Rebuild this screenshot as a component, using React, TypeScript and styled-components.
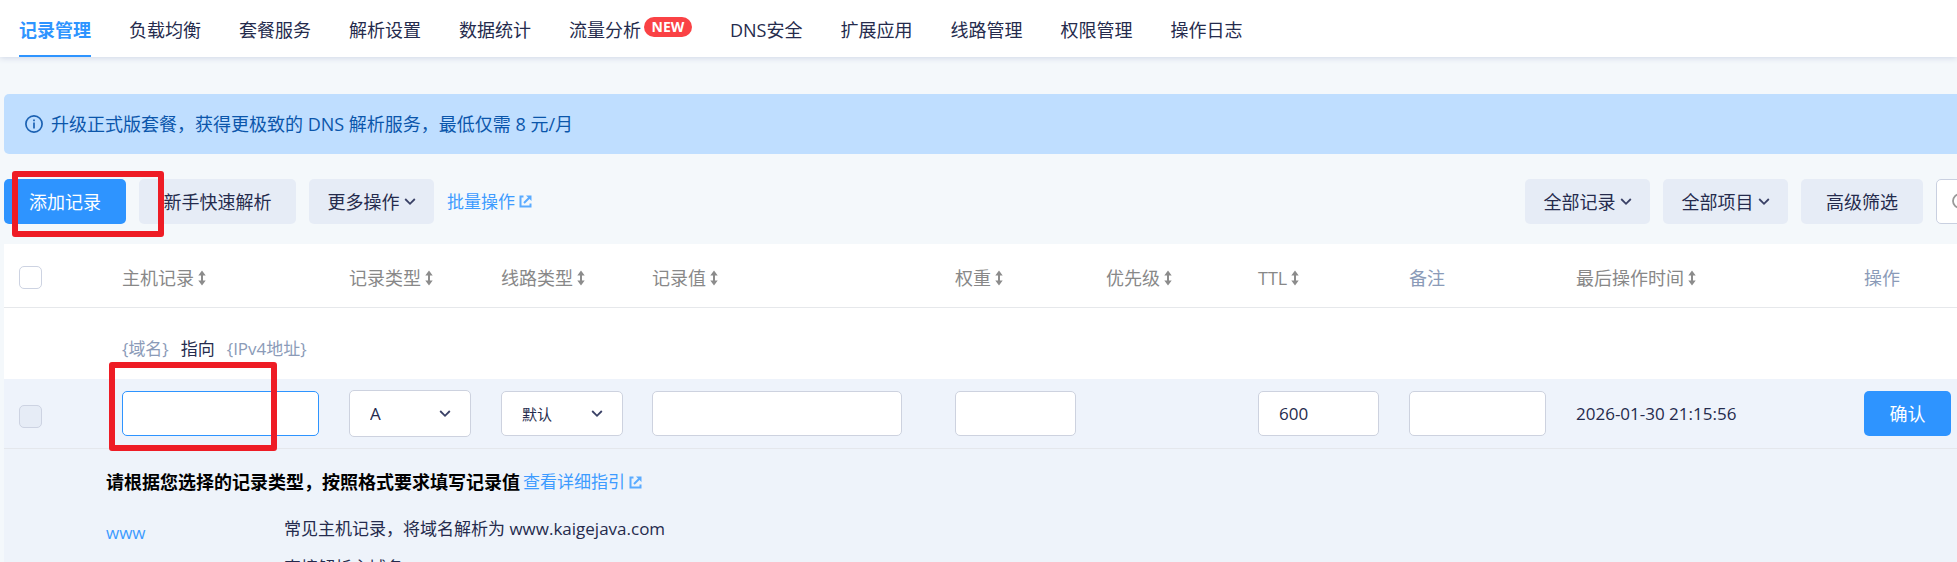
import React from "react";
import styled, { createGlobalStyle, css } from "styled-components";

const GlobalStyle = createGlobalStyle`
  *, *::before, *::after { box-sizing: border-box; }
  html, body { margin: 0; height: 100%; overflow: hidden; }
  body {
    background: #f4f8fb;
    color: #252b4d;
    font-family: "Open Sans", "Noto Sans CJK SC", sans-serif;
    font-size: 18px;
    line-height: 24px;
  }
  button, input, select { font: inherit; color: inherit; margin: 0; }
`;

const Nav = styled.nav`
  display: flex;
  gap: 38px;
  height: 57px;
  padding-left: 19px;
  background: #fff;
  box-shadow: 0 1px 6px #cfd6e6;
  white-space: nowrap;
`;

const NavLink = styled.a<{ $active?: boolean }>`
  display: flex;
  align-items: center;
  padding-top: 4px;
  border-bottom: 2px solid ${(p) => (p.$active ? "#2e94ff" : "transparent")};
  color: ${(p) => (p.$active ? "#2e94ff" : "#252b4d")};
  font-weight: ${(p) => (p.$active ? 700 : 400)};
  text-decoration: none;
`;

const NewBadge = styled.span`
  align-self: flex-start;
  width: 48px;
  height: 20px;
  margin: 13px 0 0 3px;
  border-radius: 10px;
  background: #fa4245;
  color: #fff;
  font-size: 14px;
  font-weight: 700;
  line-height: 20px;
  text-align: center;
`;

const Main = styled.main`
  padding: 37px 0 0 4px;
`;

const Notice = styled.div`
  display: flex;
  align-items: center;
  gap: 8px;
  height: 60px;
  padding: 0 21px;
  border-radius: 5px 0 0 5px;
  background: #bfdeff;
  color: #0b56ab;
`;

const Toolbar = styled.div`
  display: flex;
  align-items: center;
  gap: 13px;
  height: 90px;
  padding-top: 5px;
  white-space: nowrap;
`;

const Spacer = styled.div`
  flex: 1;
`;

const Button = styled.button<{ $primary?: boolean; $width: number }>`
  display: flex;
  align-items: center;
  justify-content: center;
  gap: 4px;
  flex: none;
  width: ${(p) => p.$width}px;
  height: 45px;
  padding: 0;
  border: 0;
  border-radius: 5px;
  background: ${(p) => (p.$primary ? "#2e94ff" : "#e6ecf6")};
  color: ${(p) => (p.$primary ? "#fff" : "#252b4d")};
`;

const TextLink = styled.a`
  display: inline-flex;
  align-items: center;
  gap: 4px;
  color: #3d9bff;
  font-size: 17px;
  text-decoration: none;
`;

const SearchClip = styled.div`
  flex: none;
  width: 21px;
  height: 45px;
  overflow: hidden;
`;

const SearchBox = styled.label`
  display: flex;
  align-items: center;
  width: 240px;
  height: 45px;
  padding-left: 15px;
  border: 1px solid #c9d0e0;
  border-radius: 5px;
  background: #fff;
  color: #999;
`;

const SearchInput = styled.input`
  width: 180px;
  border: 0;
`;

const Table = styled.table`
  width: 100%;
  min-width: 1860px;
  table-layout: fixed;
  border-collapse: separate;
  border-spacing: 0;
  background: #fff;
  text-align: left;
`;

const Col = styled.col<{ $width?: number }>`
  width: ${(p) => (p.$width ? `${p.$width}px` : "auto")};
`;

const HeadCell = styled.th<{ $plain?: boolean }>`
  height: 64px;
  padding: 4px 0 0 15px;
  border-bottom: 1px solid #e6e8eb;
  color: ${(p) => (p.$plain ? "#8b9bb8" : "#888")};
  font-weight: 400;
  white-space: nowrap;
`;

const HeadLabel = styled.span`
  display: flex;
  align-items: center;
  gap: 4px;
`;

const TipCell = styled.td`
  height: 71px;
  padding: 10px 0 0 15px;
`;

const TipText = styled.span`
  display: flex;
  gap: 12px;
  font-size: 17px;
`;

const Muted = styled.span`
  color: #8b9bb8;
`;

const Cell = styled.td`
  height: 70px;
  padding: 0 15px;
  border-bottom: 1px solid #e4e7ec;
  background: #eef3fb;
  white-space: nowrap;
`;

const CheckCell = styled(Cell)`
  padding-top: 5px;
`;

const Checkbox = styled.input`
  display: block;
  appearance: none;
  width: 23px;
  height: 23px;
  border: 1px solid #cdd3e2;
  border-radius: 5px;
  background: #fff;
  &:disabled { background: #e6ecf6; }
`;

const field = css`
  display: block;
  height: 45px;
  border: 1px solid #cdd2df;
  border-radius: 5px;
  background: #fff;
  outline: 0;
`;

const Field = styled.input<{ $width: number; $focus?: boolean }>`
  ${field}
  width: ${(p) => p.$width}px;
  padding: 0 20px;
  font-size: 17px;
  border-color: ${(p) => (p.$focus ? "#2e94ff" : "#cdd2df")};
`;

const SelectWrap = styled.span`
  display: grid;
  align-items: center;
  width: 122px;
  & > * { grid-area: 1 / 1; }
  & > svg { justify-self: end; margin-right: 20px; pointer-events: none; }
`;

const Select = styled.select<{ $small?: boolean }>`
  ${field}
  appearance: none;
  width: 100%;
  height: ${(p) => (p.$small ? 45 : 47)}px;
  padding: 0 20px;
  font-size: ${(p) => (p.$small ? 15 : 17)}px;
`;

const DateText = styled.time`
  font-size: 17px;
`;

const Guide = styled.section`
  min-height: 160px;
  padding: 21px 0 0 102px;
  background: #eef3fa;
`;

const GuideTitle = styled.h2`
  display: flex;
  align-items: center;
  gap: 3px;
  margin: 0 0 23px;
  color: #000;
  font-size: 18px;
  font-weight: 400;
`;

const GuideRow = styled.div`
  display: grid;
  grid-template-columns: 178px 1fr;
  height: 39px;
  font-size: 17px;
`;

const HostLink = styled.a`
  padding-top: 4px;
  color: #3d9bff;
  text-decoration: none;
`;

const Highlight = styled.div<{ $x: number; $y: number; $w: number; $h: number }>`
  position: absolute;
  left: ${(p) => p.$x}px;
  top: ${(p) => p.$y}px;
  width: ${(p) => p.$w}px;
  height: ${(p) => p.$h}px;
  border: 6px solid #ee1c25;
  border-radius: 3px;
  pointer-events: none;
`;

const Chevron = () => (
  <svg width="12" height="12" viewBox="0 0 12 12" fill="none" stroke="#3a4166" strokeWidth="1.8">
    <path d="M1.200 3 6 7.800 10.800 3" />
  </svg>
);

const SortIcon = () => (
  <svg width="8" height="16" viewBox="0 0 8 16" fill="#8c8c8c">
    <path d="M4 .5 7.700 5.500H5v5h2.700L4 15.500.3 10.500H3v-5H.3z" />
  </svg>
);

const ExternalIcon = () => (
  <svg width="13" height="13" viewBox="0 0 13 13" fill="none" stroke="#5aabff" strokeWidth="2">
    <path d="M4.500 1.500H1.500v10h10V8.500M5 8l5.500-5.500" />
    <path d="M7 .500h5.500V6z" fill="#5aabff" stroke="none" />
  </svg>
);

const InfoIcon = () => (
  <svg width="18" height="18" viewBox="0 0 18 18" fill="none" stroke="#1c62b3" strokeWidth="1.7">
    <circle cx="9" cy="9" r="8.100" />
    <path d="M9 7.500v6M9 4.500v1.700" />
  </svg>
);

const SearchIcon = () => (
  <svg width="18" height="18" viewBox="0 0 18 18" fill="none" stroke="#999" strokeWidth="1.800">
    <circle cx="8" cy="8" r="7" />
    <path d="m13 13 4 4" />
  </svg>
);

const navItems = [
  "记录管理", "负载均衡", "套餐服务", "解析设置", "数据统计", "流量分析",
  "DNS安全", "扩展应用", "线路管理", "权限管理", "操作日志",
];

const columns: { label: string; width?: number; sortable?: boolean }[] = [
  { label: "主机记录", width: 227, sortable: true },
  { label: "记录类型", width: 152, sortable: true },
  { label: "线路类型", width: 151, sortable: true },
  { label: "记录值", sortable: true },
  { label: "权重", width: 151, sortable: true },
  { label: "优先级", width: 152, sortable: true },
  { label: "TTL", width: 151, sortable: true },
  { label: "备注", width: 167 },
  { label: "最后操作时间", width: 288, sortable: true },
  { label: "操作", width: 108 },
];

export default function App() {
  return (
    <>
      <GlobalStyle />
      <Nav>
        {navItems.map((item, i) => (
          <NavLink key={item} href="#" $active={i === 0}>
            {item}
            {item === "流量分析" && <NewBadge>NEW</NewBadge>}
          </NavLink>
        ))}
      </Nav>
      <Main>
        <Notice>
          <InfoIcon />
          <span>升级正式版套餐，获得更极致的 DNS 解析服务，最低仅需 8 元/月</span>
        </Notice>
        <Toolbar>
          <Button $primary $width={122}>添加记录</Button>
          <Button $width={157}>新手快速解析</Button>
          <Button $width={125}>更多操作<Chevron /></Button>
          <TextLink href="#">批量操作<ExternalIcon /></TextLink>
          <Spacer />
          <Button $width={125}>全部记录<Chevron /></Button>
          <Button $width={125}>全部项目<Chevron /></Button>
          <Button $width={122}>高级筛选</Button>
          <SearchClip>
            <SearchBox>
              <SearchIcon />
              <SearchInput type="search" aria-label="搜索" />
            </SearchBox>
          </SearchClip>
        </Toolbar>
        <Table>
          <colgroup>
            <Col $width={103} />
            {columns.map((c) => <Col key={c.label} $width={c.width} />)}
          </colgroup>
          <thead>
            <tr>
              <HeadCell><Checkbox type="checkbox" aria-label="全选" /></HeadCell>
              {columns.map((c) => (
                <HeadCell key={c.label} $plain={!c.sortable}>
                  <HeadLabel>{c.label}{c.sortable && <SortIcon />}</HeadLabel>
                </HeadCell>
              ))}
            </tr>
          </thead>
          <tbody>
            <tr>
              <TipCell />
              <TipCell colSpan={10}>
                <TipText>
                  <Muted>{"{域名}"}</Muted>
                  <span>指向</span>
                  <Muted>{"{IPv4地址}"}</Muted>
                </TipText>
              </TipCell>
            </tr>
            <tr>
              <CheckCell><Checkbox type="checkbox" disabled aria-label="选择记录" /></CheckCell>
              <Cell><Field $width={197} $focus aria-label="主机记录" /></Cell>
              <Cell>
                <SelectWrap>
                  <Select aria-label="记录类型"><option>A</option></Select>
                  <Chevron />
                </SelectWrap>
              </Cell>
              <Cell>
                <SelectWrap>
                  <Select $small aria-label="线路类型"><option>默认</option></Select>
                  <Chevron />
                </SelectWrap>
              </Cell>
              <Cell><Field $width={250} aria-label="记录值" /></Cell>
              <Cell><Field $width={121} aria-label="权重" /></Cell>
              <Cell />
              <Cell><Field $width={121} defaultValue="600" aria-label="TTL" /></Cell>
              <Cell><Field $width={137} aria-label="备注" /></Cell>
              <Cell><DateText>2026-01-30 21:15:56</DateText></Cell>
              <Cell><Button $primary $width={87}>确认</Button></Cell>
            </tr>
          </tbody>
        </Table>
        <Guide>
          <GuideTitle>
            <strong>请根据您选择的记录类型，按照格式要求填写记录值</strong>
            <TextLink href="#">查看详细指引<ExternalIcon /></TextLink>
          </GuideTitle>
          <GuideRow>
            <HostLink href="#">www</HostLink>
            <span>常见主机记录，将域名解析为 www.kaigejava.com</span>
          </GuideRow>
          <GuideRow>
            <HostLink href="#">@</HostLink>
            <span>直接解析主域名 kaigejava.com</span>
          </GuideRow>
        </Guide>
      </Main>
      <Highlight $x={12} $y={171} $w={152} $h={66} />
      <Highlight $x={109} $y={362} $w={168} $h={89} />
    </>
  );
}
